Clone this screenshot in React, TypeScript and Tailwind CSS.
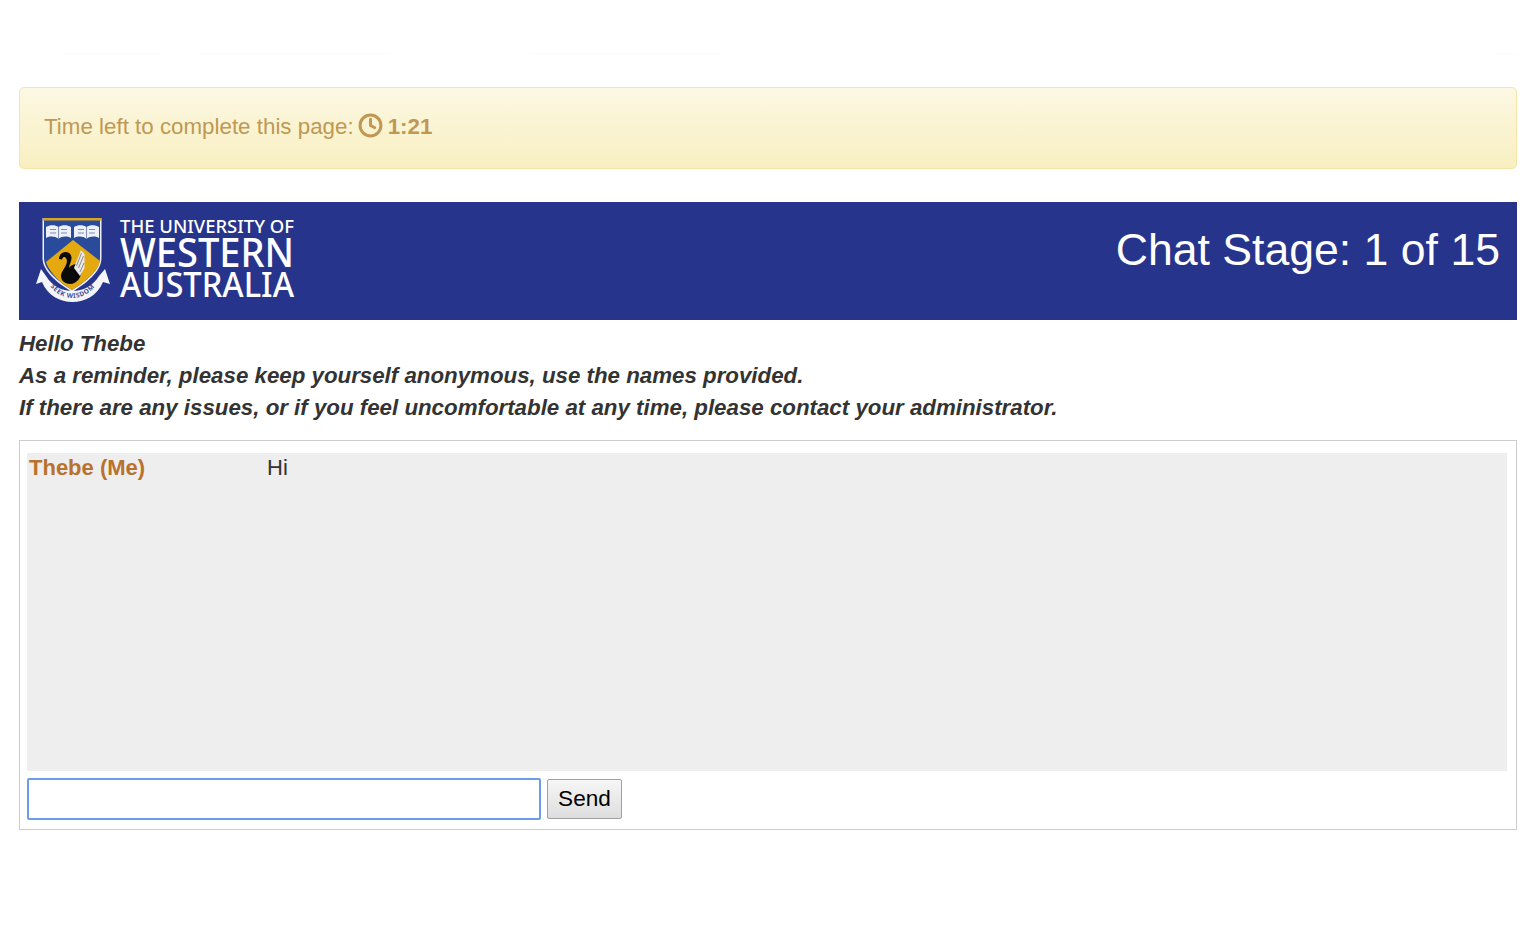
import { Clock } from "lucide-react";

// UWA crest and wordmark, all in one drawing
function UwaLogo() {
  const logoFont = "'Noto Sans', 'Open Sans', sans-serif";
  return (
    <svg width="262" height="86" viewBox="0 0 262 86" className="shrink-0 overflow-visible">
      <path d="M7.500 0 H66.500 V40 C66.500 54 50 66 37 74 C24 66 7.500 54 7.500 40 Z" fill="#eef0f6" />
      <path d="M9 2 H65 V40 C65 53 49 64.500 37 72 C25 64.500 9 53 9 40 Z" fill="#2a4b9b" />
      <rect x="8" y="0" width="58" height="2.500" fill="#d9a520" />
      {/* open books */}
      <g fill="#eef0f8">
        <path d="M11 9 C15 6.500 20 6.500 23.500 9 C27 6.500 32 6.500 36 9 V20 C32 18 27 18 23.500 21 C20 18 15 18 11 20 Z" />
        <path d="M39 9 C43 6.500 48 6.500 51.500 9 C55 6.500 60 6.500 64 9 V20 C60 18 55 18 51.500 21 C48 18 43 18 39 20 Z" />
      </g>
      <path
        d="M23.500 9 V21 M51.500 9 V21 M15 11.500 H21 M15 15 H21 M26 11.500 H32 M26 15 H32 M43 11.500 H49 M43 15 H49 M54 11.500 H60 M54 15 H60"
        fill="none"
        stroke="#7d8dbd"
        strokeWidth="1"
      />
      {/* gold diamond */}
      <path d="M38 22 L65 43 C63 54 49 64 37 72 C27 66 15 56 11 44 Z" fill="#e3a90e" />
      {/* swan */}
      <path
        d="M24 41 C24 34 32 32 35.500 36.500 C38.500 41 34 46 34 50 C36 47 39 46 42 46 L47 50 C47 59 42 66 35 66 C28 66 24 60 27 54 C30 49 33 45 31.500 41 C30 38 27.500 38.500 27 41.500 Z"
        fill="#0a0a0a"
      />
      <path d="M39 50 L46 32 L49.500 36 L49.500 50 L45 58 Z" fill="#e9e9e9" />
      <path d="M41.500 48 L46.500 35 M43.500 50 L48.500 38 M45 54 L49 45" stroke="#666" strokeWidth="0.700" fill="none" />
      {/* scroll */}
      <path
        d="M6 51 L1 66 L7 64 C13 78 25 84 37.500 84 C50 84 62 78 68 64 L75 66 L70 51 L64 58 C58 68 48 73 37.500 73 C27 73 17 68 11 58 Z"
        fill="#f4f5fa"
      />
      <path id="uwa-motto" d="M14 67 C21 76 29 80 37.500 80 C46 80 54 76 61 67" fill="none" />
      <text fontFamily={logoFont} fontSize="6.500" fontWeight="700" fill="#3c4f96" letterSpacing="0.600">
        <textPath href="#uwa-motto" startOffset="50%" textAnchor="middle">SEEK WISDOM</textPath>
      </text>
      {/* wordmark */}
      <g fontFamily={logoFont} fill="#fff" fontWeight="500">
        <text x="85" y="15" fontSize="18" textLength="174" lengthAdjust="spacingAndGlyphs">THE UNIVERSITY OF</text>
        <text x="85" y="49" fontSize="39" textLength="174" lengthAdjust="spacingAndGlyphs">WESTERN</text>
        <text x="85" y="79" fontSize="35" textLength="174" lengthAdjust="spacingAndGlyphs">AUSTRALIA</text>
      </g>
    </svg>
  );
}

export default function App() {
  return (
    <div className="min-h-[935px] bg-white px-[19px] pt-[53px] font-['Liberation_Sans',Arial,sans-serif] text-[#333]">
      {/* barely visible remains of a nav rule */}
      <div className="flex h-px">
        <div className="ml-[46px] w-[95px] bg-[#fbfbfb]" />
        <div className="ml-[40px] w-[190px] bg-[#fbfbfb]" />
        <div className="ml-[140px] w-[190px] bg-[#fbfbfb]" />
        <div className="ml-auto w-[22px] bg-[#fbfbfb]" />
      </div>

      <div className="mt-[33px] flex h-[82px] items-center rounded-[5px] border border-[#f6e5a6] bg-gradient-to-b from-[#fcf8e3] to-[#f8efc0] pb-[2px] pl-6 text-[22.350px] text-[#c09853]">
        <span>Time left to complete this page:</span>
        <Clock size={25} strokeWidth={2.900} className="mb-1 ml-1" />
        <span className="ml-[5px] font-bold">1:21</span>
      </div>

      <div className="mt-[33px] flex h-[118px] items-center justify-between bg-[#27348b] pl-4 pr-[17px]">
        <UwaLogo />
        <div className="mb-[22px] text-[44.600px] leading-none text-white">Chat Stage: 1 of 15</div>
      </div>

      <div className="mt-2 text-[22.300px] font-bold italic leading-[32px] text-[#333]">
        <div>Hello Thebe</div>
        <div>As a reminder, please keep yourself anonymous, use the names provided.</div>
        <div>If there are any issues, or if you feel uncomfortable at any time, please contact your administrator.</div>
      </div>

      <div className="mt-4 h-[390px] border border-[#ccc] pl-[7px] pr-[9px] pt-3">
        <div className="flex h-[318px] bg-[#eee] px-[2px] pt-[2px] text-[22px] leading-[26px]">
          <div className="w-[238px] font-bold text-[#b9722d]">Thebe (Me)</div>
          <div>Hi</div>
        </div>
        <div className="mt-[7px] flex items-center gap-[6px]">
          <input className="h-[42px] w-[514px] rounded-[2px] border-2 border-[#6a9ee8] bg-white outline-none" />
          <button className="h-[40px] w-[75px] rounded-[2px] border border-[#a0a0a0] bg-gradient-to-b from-[#f6f6f6] to-[#dedede] text-[22.600px] text-black">Send</button>
        </div>
      </div>
    </div>
  );
}
